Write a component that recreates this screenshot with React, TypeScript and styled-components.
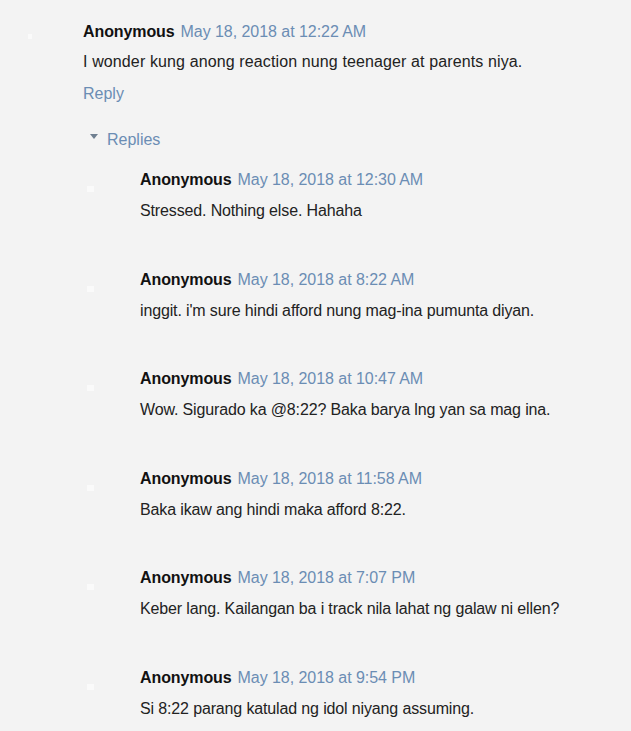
import React from "react";
import styled, { createGlobalStyle } from "styled-components";

const GlobalStyle = createGlobalStyle`
  body {
    margin: 0;
    background: #f3f3f3;
    font-family: "Liberation Sans", Arial, sans-serif;
  }
`;

type Reply = { time: string; text: string };

const replies: Reply[] = [
  { time: "May 18, 2018 at 12:30 AM", text: "Stressed. Nothing else. Hahaha" },
  { time: "May 18, 2018 at 8:22 AM", text: "inggit. i'm sure hindi afford nung mag-ina pumunta diyan." },
  { time: "May 18, 2018 at 10:47 AM", text: "Wow. Sigurado ka @8:22? Baka barya lng yan sa mag ina." },
  { time: "May 18, 2018 at 11:58 AM", text: "Baka ikaw ang hindi maka afford 8:22." },
  { time: "May 18, 2018 at 7:07 PM", text: "Keber lang. Kailangan ba i track nila lahat ng galaw ni ellen?" },
  { time: "May 18, 2018 at 9:54 PM", text: "Si 8:22 parang katulad ng idol niyang assuming." },
];

const Page = styled.div`
  width: 631px;
  height: 731px;
  overflow: hidden;
  padding: 21px 0 0 27px;
  box-sizing: border-box;
`;

const Row = styled.div`
  display: flex;
  align-items: flex-start;
`;

const Avatar = styled.div<{ $nested?: boolean }>`
  flex: none;
  width: 36px;
  height: 36px;
  margin-right: 20px;
  position: relative;

  &::after {
    content: "";
    position: absolute;
    left: ${(p) => (p.$nested ? "3px" : "1px")};
    top: ${(p) => (p.$nested ? "17px" : "13px")};
    width: ${(p) => (p.$nested ? "7px" : "4px")};
    height: ${(p) => (p.$nested ? "6px" : "5px")};
    background: #fafafa;
  }
`;

const Body = styled.div`
  flex: 1;
`;

const Header = styled.div`
  font-size: 16px;
  line-height: 22px;
  white-space: nowrap;
`;

const Author = styled.span`
  font-weight: bold;
  color: #111;
  margin-right: 6px;
  letter-spacing: -0.1px;
`;

const Time = styled.span`
  color: #6b8db4;
  letter-spacing: -0.05px;
`;

const Text = styled.div<{ $nested?: boolean }>`
  margin-top: ${(p) => (p.$nested ? "9px" : "8px")};
  font-size: 16px;
  line-height: 22px;
  color: #222;
  letter-spacing: ${(p) => (p.$nested ? "-0.14px" : "0.12px")};
`;

const ReplyLink = styled.div`
  margin-top: 10px;
  font-size: 16px;
  line-height: 22px;
  color: #6b8db4;
`;

const Toggle = styled.div`
  margin-top: 24px;
  display: flex;
  align-items: center;
  font-size: 16px;
  line-height: 22px;
  color: #6b8db4;
  padding-left: 6px;
`;

const Arrow = styled.span`
  width: 0;
  height: 0;
  border-left: 4px solid transparent;
  border-right: 4px solid transparent;
  border-top: 5px solid #6f7f90;
  margin: 0 9px 0 1px;
  transform: translateY(-4px);
`;

const Thread = styled.div`
  margin-top: 18px;
  margin-left: -56px;
  padding-left: 57px;
  display: flex;
  flex-direction: column;
  gap: 46.5px;
`;

const Comment: React.FC<{ time: string; text: string; nested?: boolean }> = ({ time, text, nested }) => (
  <Row>
    <Avatar $nested={nested} />
    <Body>
      <Header>
        <Author>Anonymous</Author>
        <Time>{time}</Time>
      </Header>
      <Text $nested={nested}>{text}</Text>
    </Body>
  </Row>
);

const App: React.FC = () => (
  <>
    <GlobalStyle />
    <Page>
      <Row>
        <Avatar />
        <Body>
          <Header>
            <Author>Anonymous</Author>
            <Time>May 18, 2018 at 12:22 AM</Time>
          </Header>
          <Text>I wonder kung anong reaction nung teenager at parents niya.</Text>
          <ReplyLink>Reply</ReplyLink>
          <Toggle>
            <Arrow />
            Replies
          </Toggle>
          <Thread>
            {replies.map((r) => (
              <Comment key={r.time} time={r.time} text={r.text} nested />
            ))}
          </Thread>
        </Body>
      </Row>
    </Page>
  </>
);

export default App;
